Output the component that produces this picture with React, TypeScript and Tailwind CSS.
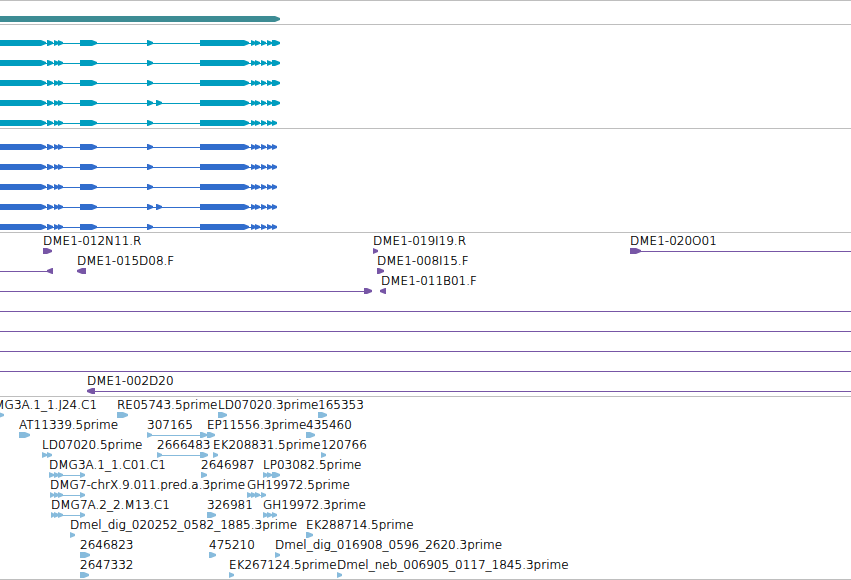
type Feature = {
  label?: string;
  at: number;
  // [start, end] of every block, in track units
  blocks: number[][];
  line?: [number, number];
  reverse?: boolean;
};

type Row = Feature[];

const EDGE = 4000;

const GENE_HEAD = [[0, 46], [47, 53], [54, 59], [58, 63], [80, 97], [147, 153]];
const GENE_TAIL = [[200, 249], [251, 256], [255, 260], [261, 266], [267, 272]];

const longTranscript: Row = [{ at: 0, line: [0, 277], blocks: [...GENE_HEAD, ...GENE_TAIL, [272, 280]] }];
const longTranscriptExtra: Row = [{ at: 0, line: [0, 277], blocks: [...GENE_HEAD, [156, 162], ...GENE_TAIL, [272, 280]] }];
const shortTranscript: Row = [{ at: 0, line: [0, 275], blocks: [...GENE_HEAD, ...GENE_TAIL, [272, 277]] }];
const shortTranscriptExtra: Row = [{ at: 0, line: [0, 275], blocks: [...GENE_HEAD, [156, 162], ...GENE_TAIL, [272, 277]] }];
const through: Row = [{ at: 0, line: [0, EDGE], blocks: [] }];

const geneRows: Row[] = [[{ at: 0, blocks: [[-10, 280]] }]];

const transcriptRows: Row[] = [
  longTranscript,
  longTranscript,
  longTranscript,
  longTranscriptExtra,
  shortTranscript,
];

const codingRows: Row[] = [
  shortTranscript,
  shortTranscript,
  shortTranscript,
  shortTranscriptExtra,
  shortTranscript,
];

const cloneRows: Row[] = [
  [
    { label: "DME1-012N11.R", at: 43, blocks: [[43, 52]] },
    { label: "DME1-019I19.R", at: 373, blocks: [[373, 378]] },
    { label: "DME1-020O01", at: 630, blocks: [[630, 641]], line: [638, EDGE] },
  ],
  [
    { at: 0, blocks: [[47, 53]], line: [0, 50], reverse: true },
    { label: "DME1-015D08.F", at: 77, blocks: [[77, 86]], reverse: true },
    { label: "DME1-008I15.F", at: 377, blocks: [[377, 384]] },
  ],
  [
    { at: 0, blocks: [[364, 372]], line: [0, 366] },
    { label: "DME1-011B01.F", at: 381, blocks: [[380, 386]], reverse: true },
  ],
  through,
  through,
  through,
  through,
  [{ label: "DME1-002D20", at: 87, blocks: [[87, 95]], line: [93, EDGE], reverse: true }],
];

const estRows: Row[] = [
  [
    { label: "DMG3A.1_1.J24.C1", at: -15, blocks: [[-1, 4]] },
    { label: "RE05743.5prime", at: 117, blocks: [[117, 128]] },
    { label: "LD07020.3prime", at: 218, blocks: [[218, 227]] },
    { label: "165353", at: 318, blocks: [[318, 327]] },
  ],
  [
    { label: "AT11339.5prime", at: 19, blocks: [[19, 30]] },
    { label: "307165", at: 147, blocks: [[147, 152], [200, 207]], line: [147, 205] },
    { label: "EP11556.3prime", at: 207, blocks: [[207, 215]] },
    { label: "435460", at: 306, blocks: [[306, 315]] },
  ],
  [
    { label: "LD07020.5prime", at: 42, blocks: [[42, 47], [47, 52]] },
    { label: "2666483", at: 157, blocks: [[157, 162], [200, 208]], line: [157, 205] },
    { label: "EK208831.5prime", at: 213, blocks: [[213, 218]] },
    { label: "120766", at: 321, blocks: [[321, 326]] },
  ],
  [
    { label: "DMG3A.1_1.C01.C1", at: 49, blocks: [[49, 54], [54, 59], [58, 63], [80, 85]], line: [49, 83] },
    { label: "2646987", at: 201, blocks: [[201, 207]] },
    { label: "LP03082.5prime", at: 263, blocks: [[263, 268], [267, 272], [272, 280]] },
  ],
  [
    { label: "DMG7-chrX.9.011.pred.a.3prime", at: 50, blocks: [[50, 54], [54, 59], [58, 63], [80, 85]], line: [50, 83] },
    { label: "GH19972.5prime", at: 247, blocks: [[247, 252], [251, 256], [255, 260], [261, 266]], line: [247, 264] },
  ],
  [
    { label: "DMG7A.2_2.M13.C1", at: 51, blocks: [[51, 55], [54, 59], [58, 63], [80, 85]], line: [51, 83] },
    { label: "326981", at: 207, blocks: [[207, 216]] },
    { label: "GH19972.3prime", at: 263, blocks: [[263, 268], [267, 272], [272, 277]] },
  ],
  [
    { label: "Dmel_dig_020252_0582_1885.3prime", at: 70, blocks: [[70, 75]] },
    { label: "EK288714.5prime", at: 306, blocks: [[306, 313]] },
  ],
  [
    { label: "2646823", at: 80, blocks: [[80, 90]] },
    { label: "475210", at: 209, blocks: [[209, 216]] },
    { label: "Dmel_dig_016908_0596_2620.3prime", at: 275, blocks: [[275, 280]] },
  ],
  [
    { label: "2647332", at: 80, blocks: [[80, 89]] },
    { label: "EK267124.5prime", at: 229, blocks: [[229, 234]] },
    { label: "Dmel_neb_006905_0117_1845.3prime", at: 337, blocks: [[337, 342]] },
  ],
];

const blockPoints = ([start, end]: number[], reverse?: boolean) => {
  const head = Math.min(5, end - start);
  return reverse
    ? `${end},0 ${start + head},0 ${start},2 ${start},4 ${start + head},6 ${end},6`
    : `${start},0 ${end - head},0 ${end},2 ${end},4 ${end - head},6 ${start},6`;
};

const TrackRow = ({ features }: { features: Row }) => (
  <div className="relative flex h-5 flex-col justify-end overflow-hidden">
    {features.map((f) =>
      f.label ? (
        <span
          key={f.label}
          className="absolute top-0 whitespace-nowrap text-[12px] leading-[14px] font-light text-black [text-shadow:0_0_0_#000]"
          style={{ left: f.at }}
        >
          {f.label}
        </span>
      ) : null
    )}
    <svg className="block h-1.5 w-full" fill="currentColor" aria-hidden="true">
      {features.map((f, i) => (
        <g key={i}>
          {f.line && <rect x={f.line[0]} y={3} width={f.line[1] - f.line[0]} height={1} />}
          {f.blocks.map((b) => (
            <polygon key={b[0]} points={blockPoints(b, f.reverse)} />
          ))}
        </g>
      ))}
    </svg>
  </div>
);

const Track = ({ rows, className }: { rows: Row[]; className: string }) => (
  <section className={`border-t border-[#bebebe] pt-px ${className}`}>
    {rows.map((features, i) => (
      <TrackRow key={i} features={features} />
    ))}
  </section>
);

const App = () => {
  return (
    <main className="w-full overflow-hidden bg-white font-['DejaVu_Sans',sans-serif]">
      <Track rows={geneRows} className="pb-0.5 text-[#3d8c94]" />
      <Track rows={transcriptRows} className="pb-0.5 text-[#009dbf]" />
      <Track rows={codingRows} className="pb-0.5 text-[#316dcd]" />
      <Track rows={cloneRows} className="pb-0.5 text-[#7756a6]" />
      <Track rows={estRows} className="border-b pb-px text-[#87bbdc]" />
    </main>
  );
};

export default App;
